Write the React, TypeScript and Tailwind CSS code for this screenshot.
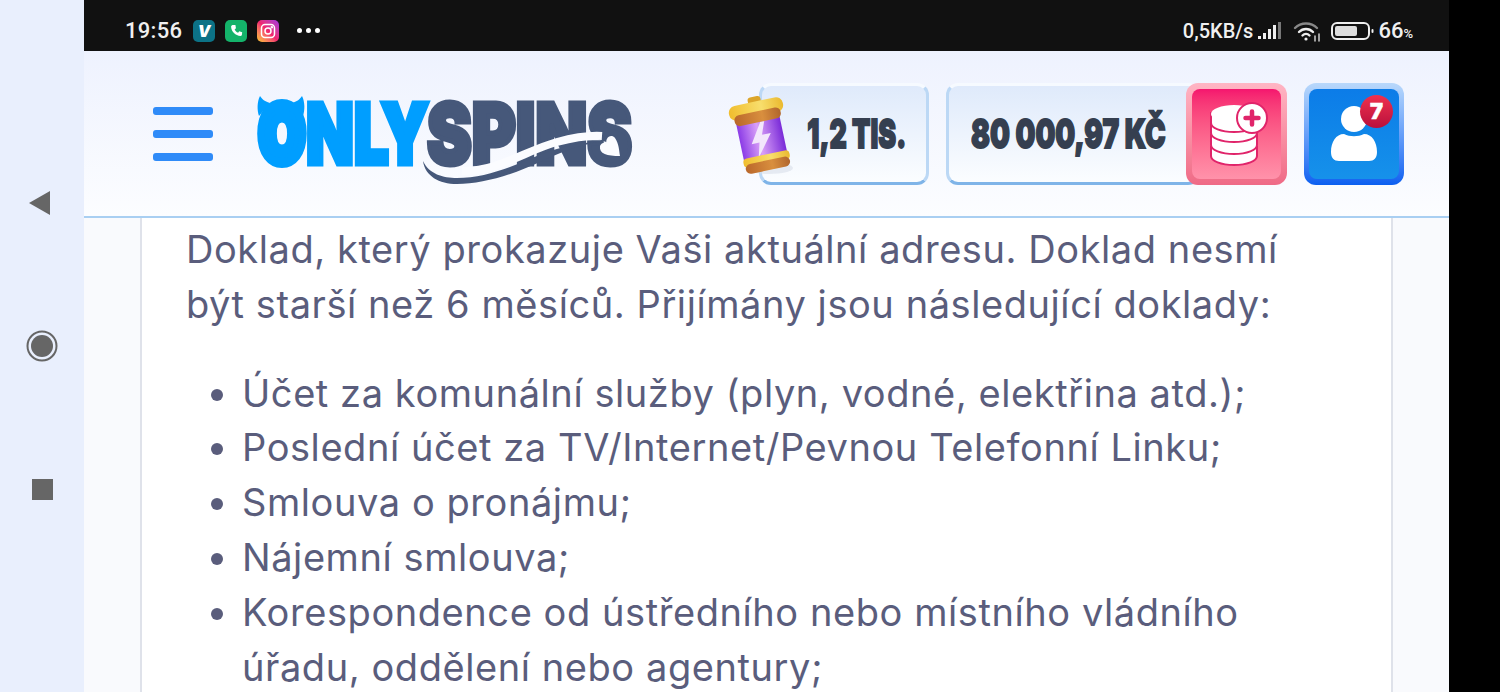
import React from "react";

function Logo() {
  return (
    <div className="relative h-[100px] w-[376px] shrink-0">
      <div className="absolute left-[2px] top-[-2px] flex h-[80px] items-center">
        <span className="inline-block w-[48px] origin-left scale-x-[0.76] whitespace-nowrap font-['Inter',sans-serif] text-[78px] leading-[80px] font-black text-[#009eff] [-webkit-text-stroke:10px_#009eff]">O</span>
      </div>
      <div className="absolute left-[49px] top-[-2px] flex h-[80px] items-center">
        <span className="inline-block w-[116px] origin-left scale-x-[0.74] whitespace-nowrap font-['Inter',sans-serif] text-[84px] leading-[80px] font-black text-[#009eff] [-webkit-text-stroke:5px_#009eff]">NLY</span>
      </div>
      <div className="absolute left-[170px] top-[-2px] flex h-[80px] items-center">
        <span className="inline-block w-[206px] origin-left scale-x-[0.8] whitespace-nowrap font-['Inter',sans-serif] text-[84px] leading-[80px] font-black text-[#46587a] [-webkit-text-stroke:5px_#46587a]">SPINS</span>
      </div>
      <svg className="absolute left-0 top-0" width="376" height="100" viewBox="0 0 376 100">
        <path d="M3 0 C5 3 7 5 13 7 L2 20 C0 14 0 6 3 0 Z" fill="#009eff" />
        <path d="M45 0 C43 3 41 5 35 7 L46 20 C48 14 48 6 45 0 Z" fill="#009eff" />
        <path d="M205 75 C240 76 270 54 300 46 C315 42 330 39 345 40" fill="none" stroke="#fbfcff" strokeWidth="8" />
        <path d="M166 65 C172 78 186 82 200 82 C226 82 252 72 275 62 C296 53 318 47 340 46 C320 50 302 57 285 65 C258 78 226 88 200 88 C182 88 168 80 166 65 Z" fill="#46587a" />
        <path d="M363 60 C350 60 342 58 343 50 C345 46 349 46 350 49 C347 42 354 37 358 42 C362 48 362 54 363 60 Z" fill="#fbfcff" />
      </svg>
    </div>
  );
}

function BatteryArt() {
  return (
    <svg className="absolute left-[-37px] top-[9px]" width="74" height="82" viewBox="0 0 74 82">
      <defs>
        <linearGradient id="gold" x1="0" x2="1" y1="0" y2="0">
          <stop offset="0" stopColor="#f0bd2e" />
          <stop offset="0.6" stopColor="#f8de6c" />
          <stop offset="1" stopColor="#eab92f" />
        </linearGradient>
        <linearGradient id="copper" x1="0" x2="1" y1="0" y2="0">
          <stop offset="0" stopColor="#b9672b" />
          <stop offset="0.6" stopColor="#d98f3e" />
          <stop offset="1" stopColor="#b0652c" />
        </linearGradient>
        <linearGradient id="purple" x1="0" x2="1" y1="0" y2="0">
          <stop offset="0" stopColor="#8b3be6" />
          <stop offset="0.45" stopColor="#d9a0f8" />
          <stop offset="1" stopColor="#7a2bd8" />
        </linearGradient>
      </defs>
      <ellipse cx="44" cy="73" rx="24" ry="6" fill="#d9dfea" opacity="0.6" />
      <g transform="rotate(-12 36 40)">
        <rect x="14" y="22" width="44" height="44" fill="url(#purple)" />
        <path d="M38 27 L25 47 L33 47 L29 62 L46 40 L37 40 L42 27 Z" fill="#f3e6fc" />
        <rect x="30" y="1" width="13" height="10" rx="3" fill="#dca52a" />
        <rect x="9" y="6" width="55" height="15" rx="7" fill="url(#gold)" />
        <rect x="13" y="16" width="47" height="11" rx="5" fill="url(#copper)" />
        <rect x="13" y="60" width="47" height="9" rx="4" fill="url(#gold)" />
        <rect x="14" y="66" width="45" height="10" rx="5" fill="url(#copper)" />
      </g>
    </svg>
  );
}

function CoinsIcon() {
  return (
    <svg width="58" height="64" viewBox="0 0 58 64">
      <g fill="#ffffff" stroke="#e0246a" strokeWidth="2">
        <path d="M1 45 v9 c0 5 10 9 23 9 s23 -4 23 -9 v-9 z" />
        <path d="M1 33 v10 c0 5 10 9 23 9 s23 -4 23 -9 v-10 z" />
        <path d="M1 21 v10 c0 5 10 9 23 9 s23 -4 23 -9 v-10 z" />
        <path d="M1 11 v10 c0 5 10 9 23 9 s23 -4 23 -9 v-10 z" />
      </g>
      <ellipse cx="24" cy="12" rx="23" ry="9" fill="#ffffff" />
      <circle cx="42" cy="16" r="15" fill="#ffffff" stroke="#e0246a" strokeWidth="2" />
      <path d="M42 9.5 v13 M35.5 16 h13" stroke="#e0246a" strokeWidth="4.5" strokeLinecap="round" />
    </svg>
  );
}

function UserIcon() {
  return (
    <svg width="46" height="56" viewBox="0 0 46 56" className="ml-[-1px]">
      <circle cx="23" cy="13" r="13" fill="#ffffff" />
      <path d="M13 28 C19 31 27 31 33 28 C41 28 46 36 46 46 C46 52 43 55 38 55 H8 C3 55 0 52 0 46 C0 36 5 28 13 28 Z" fill="#ffffff" />
    </svg>
  );
}

function StatusLeft() {
  return (
    <div className="flex items-center">
      <span className="w-[68px] font-['Roboto',sans-serif] text-[22px] font-medium tracking-[0.3px] text-[#f0f0f0]">19:56</span>
      <span className="flex h-[22px] w-[22px] items-center justify-center rounded-[5px] bg-[#0c7286] font-['Inter',sans-serif] text-[16px] leading-none font-black text-white italic">V</span>
      <span className="ml-[10px] flex h-[22px] w-[22px] items-center justify-center rounded-[5px] bg-[#14b36a]">
        <svg width="13" height="13" viewBox="0 0 24 24" fill="#ffffff"><path d="M6 2 L10 2 L11 8 L8.5 10 C10 13 12 15 15 16 L17 13.5 L22.5 15 L22 20 C22 21 21 22 19.5 22 C10 21.5 2.5 14 2 5 C2 3 4 2 6 2 Z" /></svg>
      </span>
      <span className="ml-[10px] flex h-[22px] w-[22px] items-center justify-center rounded-[5px] bg-linear-to-tr from-[#f9c31b] via-[#f0236e] to-[#a42be0]">
        <svg width="16" height="16" viewBox="0 0 16 16" fill="none" stroke="#ffffff" strokeWidth="1.5"><rect x="1.5" y="1.5" width="13" height="13" rx="3.5" /><circle cx="8" cy="8" r="3" /><circle cx="11.8" cy="4.2" r="0.5" fill="#ffffff" /></svg>
      </span>
      <span className="ml-[18px] flex gap-[4px]">
        <i className="h-[5px] w-[5px] rounded-full bg-white" />
        <i className="h-[5px] w-[5px] rounded-full bg-white" />
        <i className="h-[5px] w-[5px] rounded-full bg-white" />
      </span>
    </div>
  );
}

function StatusRight() {
  return (
    <div className="flex items-center">
      <span className="font-['Roboto',sans-serif] text-[20px] font-medium text-[#f0f0f0]">0,5KB/s</span>
      <svg className="ml-[4px]" width="26" height="20" viewBox="0 0 26 20">
        <rect x="1" y="15" width="3" height="3" fill="#eeeeee" />
        <rect x="6" y="12" width="3" height="6" fill="#eeeeee" />
        <rect x="11" y="8" width="3" height="10" fill="#eeeeee" />
        <rect x="16" y="4" width="3" height="14" fill="#eeeeee" />
        <rect x="21" y="1" width="3" height="17" fill="#777777" />
      </svg>
      <svg className="ml-[10px]" width="28" height="22" viewBox="0 0 28 22" fill="none" strokeLinecap="round">
        <path d="M2 8 C8 2 18 2 24 8" stroke="#888888" strokeWidth="2.4" />
        <path d="M6 12 C10 8 16 8 20 12" stroke="#eeeeee" strokeWidth="2.4" />
        <path d="M9.5 15.5 C11.5 13.5 14.5 13.5 16.5 15.5" stroke="#eeeeee" strokeWidth="2.4" />
        <circle cx="13" cy="19" r="1.6" fill="#eeeeee" />
        <path d="M22 16 v5 M26 14 v7" stroke="#cccccc" strokeWidth="1.5" />
      </svg>
      <svg className="ml-[10px]" width="44" height="20" viewBox="0 0 44 20" fill="none">
        <rect x="1" y="2" width="37" height="16" rx="5" stroke="#eeeeee" strokeWidth="2" />
        <rect x="4" y="5" width="22" height="10" rx="2" fill="#dddddd" />
        <rect x="40.5" y="8" width="2" height="4" rx="1" fill="#eeeeee" />
      </svg>
      <span className="ml-[3px] font-['Roboto',sans-serif] text-[22px] font-medium text-[#f0f0f0]">66<span className="text-[13px]">%</span></span>
    </div>
  );
}

function Header() {
  return (
    <header className="flex h-[167px] shrink-0 items-center border-b-2 border-[#a9cff2] bg-linear-to-b from-[#eef2fe] to-[#fcfdff] pr-[45px] pl-[69px]">
      <div className="flex w-[60px] flex-col gap-[15px]">
        <i className="h-[8px] rounded-[3px] bg-[#2f8bf8]" />
        <i className="h-[8px] rounded-[3px] bg-[#2f8bf8]" />
        <i className="h-[8px] rounded-[3px] bg-[#2f8bf8]" />
      </div>
      <div className="mt-[24px] ml-[44px]"><Logo /></div>
      <div className="ml-auto flex items-center">
        <div className="relative flex h-[102px] w-[170px] items-center justify-center rounded-[12px] border-[3px] border-t-[#f6faff] border-r-[#bcd8f5] border-b-[#7fb4e8] border-l-[#bcd8f5] bg-linear-to-b from-[#dfeafb] to-[#fbfdff] pl-[25px]">
          <BatteryArt />
          <span className="inline-block scale-x-[0.67] whitespace-nowrap font-['Inter',sans-serif] text-[40px] font-black text-[#353f50] [-webkit-text-stroke:1.8px_#353f50]">1,2 TIS.</span>
        </div>
        <div className="ml-[17px] flex h-[102px] w-[254px] items-center rounded-[12px] border-[3px] border-t-[#f6faff] border-r-[#bcd8f5] border-b-[#7fb4e8] border-l-[#bcd8f5] bg-linear-to-b from-[#dfeafb] to-[#fbfdff] pl-[22px]">
          <span className="inline-block origin-left scale-x-[0.7] whitespace-nowrap font-['Inter',sans-serif] text-[40px] font-black text-[#353f50] [-webkit-text-stroke:1.8px_#353f50]">80 000,97 KČ</span>
        </div>
        <div className="z-10 ml-[-14px] rounded-[12px] bg-linear-to-b from-[#ffb5c4] to-[#ef6a86] p-[6px]">
          <div className="flex h-[90px] w-[89px] items-center justify-center rounded-[8px] bg-linear-to-b from-[#f5146e] to-[#ff92aa] pl-[4px]">
            <CoinsIcon />
          </div>
        </div>
        <div className="relative ml-[17px] rounded-[12px] bg-linear-to-b from-[#b9d8fb] to-[#0a5ff0] p-[5px] pt-[6px] pb-[6px]">
          <div className="flex h-[90px] w-[90px] items-center justify-center rounded-[8px] bg-linear-to-b from-[#0c7ce8] to-[#1691ea]">
            <UserIcon />
          </div>
          <span className="absolute top-[12px] left-[56px] flex h-[33px] w-[33px] items-center justify-center rounded-full bg-linear-to-b from-[#f0304e] to-[#b90f3c] font-['Inter',sans-serif] text-[22px] leading-none font-black text-white [-webkit-text-stroke:0.5px_#ffffff]">7</span>
        </div>
      </div>
    </header>
  );
}

const items = [
  "Účet za komunální služby (plyn, vodné, elektřina atd.);",
  "Poslední účet za TV/Internet/Pevnou Telefonní Linku;",
  "Smlouva o pronájmu;",
  "Nájemní smlouva;",
  "Korespondence od ústředního nebo místního vládního úřadu, oddělení nebo agentury;",
];

export default function App() {
  return (
    <div className="flex h-[692px] w-[1500px] overflow-hidden bg-black">
      <aside className="flex w-[84px] shrink-0 flex-col items-center bg-[#e9effd] pt-[190px]">
        <svg className="ml-[-4px]" width="22" height="26" viewBox="0 0 22 26"><path d="M0 13 L21 1 V25 Z" fill="#666666" /></svg>
        <svg className="mt-[114px]" width="32" height="32" viewBox="0 0 32 32"><circle cx="16" cy="16" r="14.5" fill="none" stroke="#666666" strokeWidth="2" /><circle cx="16" cy="16" r="11" fill="#666666" /></svg>
        <div className="mt-[117px] h-[21px] w-[21px] bg-[#666666]" />
      </aside>
      <main className="flex w-[1365px] shrink-0 flex-col">
        <div className="flex h-[51px] shrink-0 items-center justify-between bg-[#111111] pt-[10px] pr-[36px] pl-[41px]">
          <StatusLeft />
          <StatusRight />
        </div>
        <Header />
        <div className="flex-1 overflow-hidden bg-[#f9fafd] px-[56px]">
          <div className="h-full border-x-2 border-[#dfe2ea] bg-white pt-[4px] pl-[45px] font-['Inter',sans-serif] text-[38px] leading-[54.8px] tracking-[0.57px] text-[#5a5d7c]">
            <p className="ml-[-1px] w-[1110px]">Doklad, který prokazuje Vaši aktuální adresu. Doklad nesmí být starší než 6 měsíců. Přijímány jsou následující doklady:</p>
            <ul className="mt-[34px] ml-[-1px] w-[1075px] list-disc pl-[56px] marker:text-[#5a5d7c]">
              {items.map((t) => (
                <li key={t}>{t}</li>
              ))}
            </ul>
          </div>
        </div>
      </main>
    </div>
  );
}
